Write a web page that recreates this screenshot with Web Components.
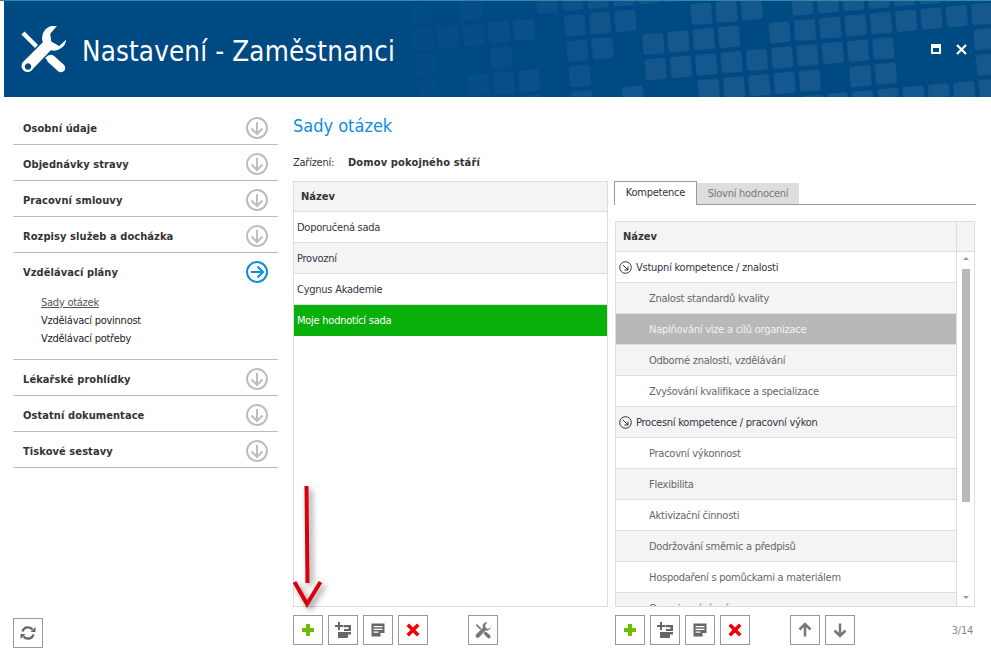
<!DOCTYPE html>
<html lang="cs">
<head>
<meta charset="utf-8">
<title>Nastavení - Zaměstnanci</title>
<style>
    html, body { margin: 0; height: 100%; background: #fff; overflow: hidden; }
    body { font-family: "DejaVu Sans Condensed", "DejaVu Sans", sans-serif; font-stretch: condensed; font-size: 11px; letter-spacing: -.25px; color: #333; }
</style>
</head>
<body>
<settings-app>
    <title-bar slot="top" heading="Nastavení - Zaměstnanci"></title-bar>

    <side-nav slot="nav">
        <nav-item label="Osobní údaje"></nav-item>
        <nav-item label="Objednávky stravy"></nav-item>
        <nav-item label="Pracovní smlouvy"></nav-item>
        <nav-item label="Rozpisy služeb a docházka"></nav-item>
        <nav-item label="Vzdělávací plány" active>
            <sub-link current>Sady otázek</sub-link>
            <sub-link>Vzdělávací povinnost</sub-link>
            <sub-link>Vzdělávací potřeby</sub-link>
        </nav-item>
        <nav-item label="Lékařské prohlídky"></nav-item>
        <nav-item label="Ostatní dokumentace"></nav-item>
        <nav-item label="Tiskové sestavy"></nav-item>
    </side-nav>
    <tool-button slot="refresh" icon="refresh"></tool-button>

    <page-head slot="head" heading="Sady otázek" label="Zařízení:" value="Domov pokojného stáří"></page-head>

    <data-table slot="left" heading="Název">
        <table-row>Doporučená sada</table-row>
        <table-row alt>Provozní</table-row>
        <table-row>Cygnus Akademie</table-row>
        <table-row selected="green">Moje hodnotící sada</table-row>
    </data-table>

    <tool-bar slot="left-tools">
        <tool-button icon="plus"></tool-button>
        <tool-button icon="addlist"></tool-button>
        <tool-button icon="note"></tool-button>
        <tool-button icon="cross"></tool-button>
        <tool-button icon="tools" class="apart"></tool-button>
    </tool-bar>

    <tab-strip slot="tabs" active="Kompetence" other="Slovní hodnocení"></tab-strip>

    <data-table slot="right" heading="Název" scroll>
        <table-row group>Vstupní kompetence / znalosti</table-row>
        <table-row child alt>Znalost standardů kvality</table-row>
        <table-row child selected="gray">Naplňování vize a cílů organizace</table-row>
        <table-row child alt>Odborné znalosti, vzdělávání</table-row>
        <table-row child>Zvyšování kvalifikace a specializace</table-row>
        <table-row group alt>Procesní kompetence / pracovní výkon</table-row>
        <table-row child>Pracovní výkonnost</table-row>
        <table-row child alt>Flexibilita</table-row>
        <table-row child>Aktivizační činnosti</table-row>
        <table-row child alt>Dodržování směrnic a předpisů</table-row>
        <table-row child>Hospodaření s pomůckami a materiálem</table-row>
        <table-row child alt>Organizování práce</table-row>
    </data-table>

    <tool-bar slot="right-tools" pager="3/14">
        <tool-button icon="plus"></tool-button>
        <tool-button icon="addlist"></tool-button>
        <tool-button icon="note"></tool-button>
        <tool-button icon="cross"></tool-button>
        <tool-button icon="up" class="apart"></tool-button>
        <tool-button icon="down"></tool-button>
    </tool-bar>

    <red-arrow slot="overlay"></red-arrow>
</settings-app>

<script>
// Ikony tlacitek
const ICONS = {
    plus: '<path fill="#6cbf00" d="M13 9h4v4h4v4h-4v4h-4v-4H9v-4h4z"/>',
    cross: '<path fill="#f00000" d="M11 8.500l4 4 4-4 2.500 2.500-4 4 4 4-2.500 2.500-4-4-4 4L8.500 19l4-4-4-4z"/>',
    addlist: '<path fill="#666" d="M10 7h2v3h3v2h-3v3h-2v-3H7v-2h3z"/><path fill="#666" d="M15.500 10h7.500v6h-7v-2h4.500v-1.800h-5zM10 17h13v2.500L19.500 23H10z"/><path fill="#fff" d="M20 23l3-3.500h-3z"/>',
    note: '<path fill="#666" d="M8.500 8.500h13v9l-4 4h-9z"/><path fill="#fff" d="M10.500 11h9v1.200h-9zM10.500 13.800h9V15h-9zM10.500 16.600h5v1.200h-5zM17.500 21.500V18h4z"/>',
    tools: '<g transform="translate(7 7) scale(.34)"><path fill="none" stroke="#777" stroke-width="5" d="M4 8l24 24"/><path fill="none" stroke="#777" stroke-width="10" stroke-linecap="round" d="M31 34l10 9"/><path fill="#777" stroke="#fff" stroke-width="2" d="M33 0A13 13 0 0 0 22 17L3 36A6.500 6.500 0 0 0 12 46L31 26A13 13 0 0 0 47 13L39 20 32 16 31 9 38 1Q36 0 33 0Z"/></g>',
    up: '<path fill="none" stroke="#777" stroke-width="2.500" d="M15 21.500V10M9.500 14.500L15 9l5.500 5.500"/>',
    down: '<path fill="none" stroke="#777" stroke-width="2.500" d="M15 8.500V20M9.500 15.500L15 21l5.500-5.500"/>',
    refresh: '<path fill="none" stroke="#666" stroke-width="2.200" d="M9.500 13.500A5.700 5.700 0 0 1 19.500 11.500M20.500 16.500A5.700 5.700 0 0 1 10.500 18.500"/><path fill="#666" d="M22.500 9v5h-5zM7.500 21v-5h5z"/>'
};

class TitleBar extends HTMLElement {
    constructor() {
        super();
        this.attachShadow({ mode: 'open' });
    }

    tiles() {
        // mrizka ctvercu v pozadi, smerem doleva slabne
        let out = '';
        for (let i = -18; i < 9; i++) {
            for (let j = -3; j < 6; j++) {
                const x = 805 + 25.3 * i + 2.5 * j;
                const y = 30 - 2.3 * i + 25.3 * j;
                if (y < -22 || y > 110 || x < 420 || x > 1010) continue;
                // volne misto kolem tlacitek okna
                if (x > 885 && x < 972 && y > 35 && y < 72) continue;
                if (x > 830 && x < 860 && y > 60 && y < 85) continue;
                const h = Math.abs(Math.sin(i * 12.9898 + j * 78.233) * 43758.5453) % 1;
                if (x < 780 && h < 0.3) continue;
                const a = Math.min(0.08, 0.015 + Math.max(0, x - 430) / 4000);
                out += `<rect x="${x - 10.5}" y="${y - 10.5}" width="21" height="21" rx="3" fill="#fff" fill-opacity="${a.toFixed(3)}" transform="rotate(-5 ${x} ${y})"/>`;
            }
        }
        return out;
    }

    connectedCallback() {
        this.shadowRoot.innerHTML = `
            <style>
                :host { display: block; height: 97px; box-sizing: border-box; border-top: 1px solid #2c8ba6; }
                .bar {
                    position: relative;
                    margin-left: 4px;
                    height: 96px;
                    background: #004a84;
                    overflow: hidden;
                    display: flex;
                    align-items: center;
                    color: #fff;
                }
                .bg { position: absolute; left: -4px; top: -1px; }
                .logo { position: relative; margin: 0 14px 0 16px; flex: none; }
                h1 { position: relative; margin: 3px 0 0; font-weight: 400; font-size: 27.500px; letter-spacing: .15px; flex: 1; }
                .win { position: relative; display: flex; gap: 14px; margin-right: 24px; }
            </style>
            <div class="bar">
                <svg class="bg" width="991" height="97">${this.tiles()}</svg>
                <svg class="logo" width="48" height="48" viewBox="0 0 48 48">
                    <path fill="none" stroke="#fff" stroke-width="4.500" d="M3 8l25 25"/>
                    <path fill="none" stroke="#fff" stroke-width="8.500" stroke-linecap="round" d="M31 34l10 9"/>
                    <path fill="#fff" fill-rule="evenodd" stroke="#004a84" stroke-width="1.500" d="M33 0A13 13 0 0 0 22 17L3 36A6.500 6.500 0 0 0 12 46L31 26A13 13 0 0 0 47 13L39 20 32 16 31 9 38 1Q36 0 33 0ZM8 39a2.500 2.500 0 1 0 .01 0Z"/>
                </svg>
                <h1>${this.getAttribute('heading')}</h1>
                <div class="win">
                    <svg width="11" height="11" viewBox="0 0 11 11"><path fill="#fff" fill-rule="evenodd" d="M0 0h10v10H0zM2 4v4h6V4z"/></svg>
                    <svg width="11" height="11" viewBox="0 0 11 11"><path stroke="#fff" stroke-width="2.200" d="M1 1l9 9M10 1L1 10"/></svg>
                </div>
            </div>
        `;
    }
}

class SideNav extends HTMLElement {
    constructor() {
        super();
        this.attachShadow({ mode: 'open' });
        this.shadowRoot.innerHTML = `
            <style>
                :host { display: flex; flex-direction: column; }
            </style>
            <slot></slot>
        `;
    }
}

class NavItem extends HTMLElement {
    constructor() {
        super();
        this.attachShadow({ mode: 'open' });
    }

    connectedCallback() {
        const on = this.hasAttribute('active');
        const col = on ? '#0f8ddd' : '#bdbdbd';
        const arrow = on ? 'M6 12h11.500M12.500 6.500L18 12l-5.500 5.500' : 'M12 6v11.500M6.500 12.500L12 18l5.500-5.500';
        this.shadowRoot.innerHTML = `
            <style>
                :host { display: block; border-bottom: 1px solid #bbb; padding-bottom: ${on ? '11px' : '0'}; }
                .row { display: flex; align-items: center; justify-content: space-between; box-sizing: border-box; height: 35px; padding: 3px 9px 0 10px; }
                b { font-weight: 700; letter-spacing: .08px; color: #333; }
                svg { display: block; }
                .sub { display: flex; flex-direction: column; padding: 6px 0 0 28px; }
            </style>
            <div class="row">
                <b>${this.getAttribute('label')}</b>
                <svg width="24" height="24" viewBox="0 0 24 24" fill="none" stroke="${col}" stroke-width="2"><circle cx="12" cy="12" r="10"/><path d="${arrow}"/></svg>
            </div>
            ${on ? '<div class="sub"><slot></slot></div>' : ''}
        `;
    }
}

class SubLink extends HTMLElement {
    constructor() {
        super();
        this.attachShadow({ mode: 'open' });
        this.shadowRoot.innerHTML = `
            <style>
                :host { display: block; height: 18px; line-height: 18px; color: #222; }
                :host([current]) { color: #555; text-decoration: underline; }
            </style>
            <slot></slot>
        `;
    }
}

class PageHead extends HTMLElement {
    constructor() {
        super();
        this.attachShadow({ mode: 'open' });
    }

    connectedCallback() {
        this.shadowRoot.innerHTML = `
            <style>
                :host { display: block; }
                h2 { margin: 0; height: 44px; padding-top: 5px; box-sizing: border-box; font-weight: 400; font-size: 18px; letter-spacing: 0; line-height: 24px; color: #0f8ddd; }
                .line { display: flex; align-items: center; height: 18px; }
                span { width: 55px; color: #333; }
                b { color: #333; letter-spacing: .14px; }
            </style>
            <h2>${this.getAttribute('heading')}</h2>
            <div class="line"><span>${this.getAttribute('label')}</span><b>${this.getAttribute('value')}</b></div>
        `;
    }
}

class DataTable extends HTMLElement {
    constructor() {
        super();
        this.attachShadow({ mode: 'open' });
    }

    connectedCallback() {
        const scroll = this.hasAttribute('scroll');
        this.shadowRoot.innerHTML = `
            <style>
                :host { display: block; height: 100%; box-sizing: border-box; border: 1px solid #ddd; overflow: hidden; }
                .wrap { display: grid; grid-template-columns: 1fr ${scroll ? '18px' : ''}; grid-template-rows: 30px 1fr; height: 100%; }
                .head { background: #f4f4f4; border-bottom: 1px solid #ddd; font-weight: 700; letter-spacing: 0; color: #333; line-height: 29px; padding-left: 7px; }
                .corner { background: #f4f4f4; border-bottom: 1px solid #ddd; border-left: 1px solid #ddd; }
                .rows { overflow: hidden; min-height: 0; }
                .bar { border-left: 1px solid #ddd; position: relative; display: flex; flex-direction: column; align-items: center; min-height: 0; }
                .thumb { width: 8px; height: 233px; background: #b9b9b9; margin-top: 17px; }
                .tri { position: absolute; width: 0; height: 0; border-left: 3px solid transparent; border-right: 3px solid transparent; }
                .tri.top { top: 5px; border-bottom: 3px solid #999; }
                .tri.bot { bottom: 7px; border-top: 3px solid #999; }
            </style>
            <div class="wrap">
                <div class="head">${this.getAttribute('heading')}</div>
                ${scroll ? '<div class="corner"></div>' : ''}
                <div class="rows"><slot></slot></div>
                ${scroll ? '<div class="bar"><i class="tri top"></i><div class="thumb"></div><i class="tri bot"></i></div>' : ''}
            </div>
        `;
    }
}

class TableRow extends HTMLElement {
    constructor() {
        super();
        this.attachShadow({ mode: 'open' });
    }

    connectedCallback() {
        const group = this.hasAttribute('group');
        this.shadowRoot.innerHTML = `
            <style>
                :host { display: flex; align-items: center; gap: 4px; height: 31px; box-sizing: border-box; border-bottom: 1px solid #ddd; padding-left: 3px; color: #334; background: #fff; }
                :host([alt]) { background: #f4f4f4; }
                :host([child]) { padding-left: 33px; color: #666; }
                :host([selected="green"]) { background: #09b00b; color: #fff; border-bottom-color: #09b00b; }
                :host([selected="gray"]) { background: #b8b8b8; color: #f2f2f2; }
                svg { flex: none; }
            </style>
            ${group ? '<svg width="13" height="13" viewBox="0 0 13 13" fill="none" stroke="#333" stroke-width="1"><circle cx="6.500" cy="6.500" r="5.800"/><path d="M4 4l5 5M9 5.500V9H5.500"/></svg>' : ''}
            <slot></slot>
        `;
    }
}

class TabStrip extends HTMLElement {
    constructor() {
        super();
        this.attachShadow({ mode: 'open' });
    }

    connectedCallback() {
        this.shadowRoot.innerHTML = `
            <style>
                :host { display: flex; align-items: flex-end; height: 24px; box-sizing: border-box; border-bottom: 1px solid #999; margin-left: -1px; }
                div { box-sizing: border-box; text-align: center; }
                .on { width: 83px; height: 24px; line-height: 22px; background: #fff; border: 1px solid #999; border-bottom: 0; color: #333; margin-bottom: -1px; position: relative; }
                .off { width: 102px; height: 21px; line-height: 22px; background: #ddd; color: #777; }
            </style>
            <div class="on">${this.getAttribute('active')}</div>
            <div class="off">${this.getAttribute('other')}</div>
        `;
    }
}

class ToolBar extends HTMLElement {
    constructor() {
        super();
        this.attachShadow({ mode: 'open' });
    }

    connectedCallback() {
        const pager = this.getAttribute('pager');
        this.shadowRoot.innerHTML = `
            <style>
                :host { display: flex; align-items: center; gap: 5px; }
                ::slotted(.apart) { margin-left: 35px; }
                .pager { margin-left: auto; margin-right: 3px; color: #888; }
            </style>
            <slot></slot>
            ${pager ? `<span class="pager">${pager}</span>` : ''}
        `;
    }
}

class ToolButton extends HTMLElement {
    constructor() {
        super();
        this.attachShadow({ mode: 'open' });
    }

    connectedCallback() {
        this.shadowRoot.innerHTML = `
            <style>
                :host { display: block; width: 30px; height: 30px; box-sizing: border-box; border: 1px solid #999; background: #fff; }
                svg { display: block; margin: -1px; }
            </style>
            <svg width="30" height="30" viewBox="0 0 30 30">${ICONS[this.getAttribute('icon')] || ''}</svg>
        `;
    }
}

// Cervena sipka pres obrazovku, je to jen znacka nad obsahem
class RedArrow extends HTMLElement {
    constructor() {
        super();
        this.attachShadow({ mode: 'open' });
        this.shadowRoot.innerHTML = `
            <style>
                :host { position: absolute; left: 285px; top: 480px; pointer-events: none; }
                svg { display: block; filter: drop-shadow(3px 3px 3px rgba(0,0,0,.45)); overflow: visible; }
            </style>
            <svg width="50" height="135" viewBox="0 0 50 135" fill="none" stroke="#d9000a" stroke-width="4">
                <path d="M21.500 6L22.500 103"/>
                <path d="M9.500 102L22 124 35.500 102"/>
            </svg>
        `;
    }
}

class SettingsApp extends HTMLElement {
    constructor() {
        super();
        this.attachShadow({ mode: 'open' });
        this.shadowRoot.innerHTML = `
            <style>
                :host { display: block; position: relative; height: 658px; overflow: hidden; }
                .body {
                    display: grid;
                    grid-template-columns: 265px 330px 368px;
                    grid-template-rows: 54px 18px 24px 16px 386px 38px;
                    padding: 12px 0 0 13px;
                }
                .nav { grid-column: 1; grid-row: 1 / 6; }
                .refresh { grid-column: 1; grid-row: 6; margin-top: 11px; }
                .head { grid-column: 2 / 4; grid-row: 1 / 3; margin-left: 15px; }
                .left { grid-column: 2; grid-row: 3 / 6; margin-left: 15px; min-height: 0; }
                .tabs { grid-column: 3; grid-row: 3; margin-left: 7px; }
                .right { grid-column: 3; grid-row: 5; margin-left: 7px; min-height: 0; margin-right: 1px; }
                .ltools { grid-column: 2; grid-row: 6; margin-left: 15px; margin-top: 8px; }
                .rtools { grid-column: 3; grid-row: 6; margin-left: 7px; margin-top: 8px; }
            </style>
            <slot name="top"></slot>
            <div class="body">
                <div class="nav"><slot name="nav"></slot></div>
                <div class="refresh"><slot name="refresh"></slot></div>
                <div class="head"><slot name="head"></slot></div>
                <div class="left"><slot name="left"></slot></div>
                <div class="ltools"><slot name="left-tools"></slot></div>
                <div class="tabs"><slot name="tabs"></slot></div>
                <div class="right"><slot name="right"></slot></div>
                <div class="rtools"><slot name="right-tools"></slot></div>
            </div>
            <slot name="overlay"></slot>
        `;
    }
}

customElements.define('title-bar', TitleBar);
customElements.define('side-nav', SideNav);
customElements.define('nav-item', NavItem);
customElements.define('sub-link', SubLink);
customElements.define('page-head', PageHead);
customElements.define('data-table', DataTable);
customElements.define('table-row', TableRow);
customElements.define('tab-strip', TabStrip);
customElements.define('tool-bar', ToolBar);
customElements.define('tool-button', ToolButton);
customElements.define('red-arrow', RedArrow);
customElements.define('settings-app', SettingsApp);
</script>
</body>
</html>
